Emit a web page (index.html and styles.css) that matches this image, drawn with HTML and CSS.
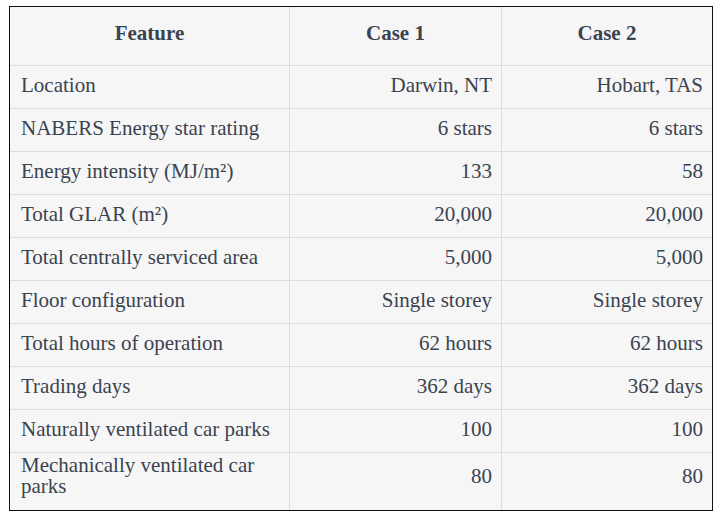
FILE: index.html
```html
<!DOCTYPE html>
<html lang="en">
<head>
<meta charset="utf-8">
<title>Case comparison</title>
<link rel="stylesheet" href="styles.css">
</head>
<body>
<div class="frame">
  <table class="cases">
    <colgroup>
      <col class="c-feature">
      <col class="c-case">
      <col class="c-case2">
    </colgroup>
    <thead>
      <tr>
        <th>Feature</th>
        <th>Case 1</th>
        <th>Case 2</th>
      </tr>
    </thead>
    <tbody>
      <tr><td>Location</td><td class="num">Darwin, NT</td><td class="num">Hobart, TAS</td></tr>
      <tr><td>NABERS Energy star rating</td><td class="num">6 stars</td><td class="num">6 stars</td></tr>
      <tr><td>Energy intensity (MJ/m²)</td><td class="num">133</td><td class="num">58</td></tr>
      <tr><td>Total GLAR (m²)</td><td class="num">20,000</td><td class="num">20,000</td></tr>
      <tr><td>Total centrally serviced area</td><td class="num">5,000</td><td class="num">5,000</td></tr>
      <tr><td>Floor configuration</td><td class="num">Single storey</td><td class="num">Single storey</td></tr>
      <tr><td>Total hours of operation</td><td class="num">62 hours</td><td class="num">62 hours</td></tr>
      <tr><td>Trading days</td><td class="num">362 days</td><td class="num">362 days</td></tr>
      <tr><td>Naturally ventilated car parks</td><td class="num">100</td><td class="num">100</td></tr>
      <tr class="last"><td>Mechanically ventilated car parks</td><td class="num">80</td><td class="num">80</td></tr>
    </tbody>
  </table>
</div>
</body>
</html>
```
FILE: styles.css
```css
html, body {
  margin: 0;
  padding: 0;
  background: #ffffff;
}
body {
  padding: 6px 0 0 9px;
}
.frame {
  box-sizing: border-box;
  width: 704px;
  height: 505px;
  border: 1px solid #111111;
  background: #f6f6f6;
  overflow: hidden;
}
.cases {
  width: 702px;
  height: 503px;
  table-layout: fixed;
  border-collapse: separate;
  border-spacing: 0;
  font-family: "Liberation Serif", "DejaVu Serif", serif;
  font-size: 21px;
  line-height: 20px;
  color: #3b4350;
}
.c-feature { width: 280px; }
.c-case { width: 212px; }
.c-case2 { width: 210px; }
.cases th,
.cases td {
  box-sizing: border-box;
  border-right: 1px solid #dcdce4;
  border-bottom: 1px solid #dcdce4;
  vertical-align: middle;
}
.cases th:last-child,
.cases td:last-child {
  border-right: none;
}
.cases th {
  font-weight: bold;
  text-align: center;
  padding: 15px 10px 21px;
  height: 59px;
}
.cases td {
  padding: 9px 9px 13px 11px;
  text-align: left;
  height: 43px;
}
.cases td.num {
  text-align: right;
}
.cases tr.last td {
  border-bottom: none;
  padding: 2px 9px 14px 11px;
  line-height: 21px;
  height: auto;
}
```
